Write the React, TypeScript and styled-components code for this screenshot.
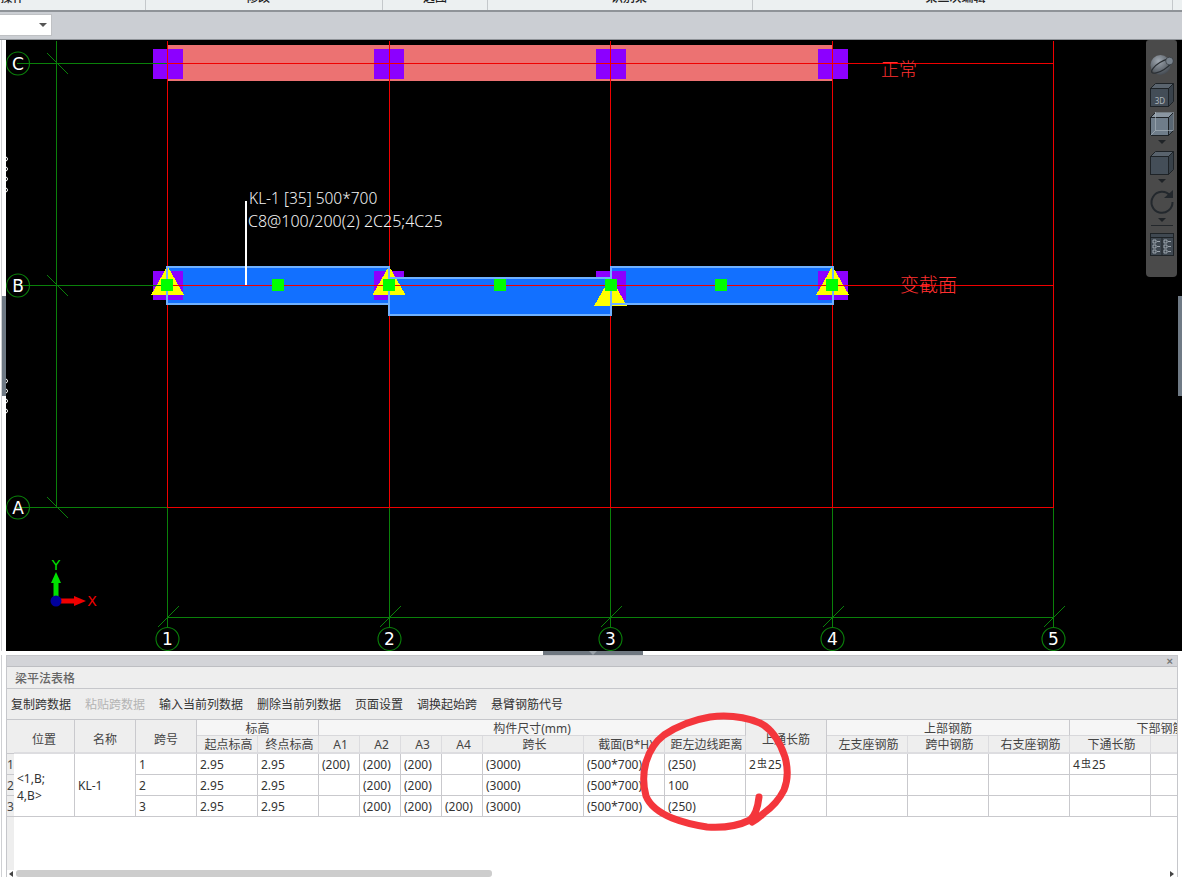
import styled, { createGlobalStyle } from "styled-components";

const GlobalStyle = createGlobalStyle`
  html, body {
    margin: 0;
    padding: 0;
    background: #fff;
    overflow: hidden;
  }
`;

const Page = styled.div`
  position: relative;
  width: 1182px;
  height: 877px;
  overflow: hidden;
  display: flex;
  flex-direction: column;
  font-family: "Noto Sans", "Noto Sans CJK SC", sans-serif;
  font-size: 12px;
  color: #333;
`;

const Ribbon = styled.div`
  height: 10px;
  flex: none;
  display: flex;
  background: #ecf0f1;
  border-bottom: 2px solid #8f9398;
`;

const RibbonGroup = styled.div<{ $w: number; $shift?: number }>`
  width: ${(p) => p.$w}px;
  flex: none;
  height: 10px;
  overflow: hidden;
  display: flex;
  justify-content: center;
  align-items: flex-end;
  border-right: 1px solid #c4c8cb;
  box-sizing: border-box;
  span {
    display: block;
    line-height: 12px;
    margin-bottom: 7px;
    transform: translateX(${(p) => p.$shift ?? 0}px);
    font-family: "Noto Sans CJK SC", sans-serif;
    font-weight: 500;
    color: #222;
    white-space: nowrap;
  }
`;

const Toolbar = styled.div`
  height: 27px;
  flex: none;
  display: flex;
  align-items: flex-start;
  background: #cbced3;
  border-bottom: 1px solid #8f9398;
`;

const SelectBox = styled.div`
  width: 52px;
  height: 22px;
  margin-top: 2px;
  box-sizing: border-box;
  display: flex;
  align-items: center;
  justify-content: flex-end;
  padding-right: 4px;
  background: #fff;
  border: 1px solid #bfc1c4;
  border-left: none;
`;

const Caret = styled.i<{ $color?: string }>`
  display: block;
  width: 0;
  height: 0;
  border-left: 4px solid transparent;
  border-right: 4px solid transparent;
  border-top: 4px solid ${(p) => p.$color ?? "#555"};
`;

const Workspace = styled.div`
  height: 611px;
  flex: none;
  display: flex;
`;

const LeftRail = styled.div`
  width: 6px;
  flex: none;
  box-sizing: border-box;
  position: relative;
  background: #fff;
  &::before {
    content: "";
    position: absolute;
    left: 1px;
    top: 0;
    bottom: 0;
    width: 1px;
    background: #cfd0d3;
  }
`;

const RailGrip = styled.div`
  position: absolute;
  left: 2px;
  top: 256px;
  width: 4px;
  height: 100px;
  background: #6f7a85;
`;

const Canvas = styled.div`
  position: relative;
  flex: 1;
  background: #000;
  svg {
    display: block;
  }
`;

const ViewBar = styled.div`
  position: absolute;
  right: 5px;
  top: 0;
  width: 31px;
  height: 237px;
  box-sizing: border-box;
  padding-top: 13px;
  display: flex;
  flex-direction: column;
  align-items: center;
  background: #4a4a4a;
  border-radius: 3px 3px 4px 4px;
`;

const ViewIcon = styled.svg<{ $gap?: number }>`
  width: 24px;
  height: 24px;
  flex: none;
  overflow: visible;
  margin-bottom: ${(p) => p.$gap ?? 0}px;
`;

const ViewCaret = styled(Caret)`
  margin: 4px 0 7px;
`;

const ViewDivider = styled.div`
  width: 22px;
  height: 1px;
  flex: none;
  background: #23272b;
  margin: -4px 0 6px;
`;

const RightGrip = styled.div`
  position: absolute;
  right: 0;
  top: 256px;
  width: 4px;
  height: 100px;
  background: #6f7a85;
`;

const Splitter = styled.div`
  height: 4px;
  flex: none;
  display: flex;
  justify-content: center;
  padding-left: 4px;
  background: #fff;
`;

const SplitterHandle = styled.div`
  width: 100px;
  height: 4px;
  display: flex;
  justify-content: center;
  background: #6f7780;
`;

const PanelRow = styled.div`
  flex: 1;
  min-height: 0;
  display: flex;
`;

const Panel = styled.div`
  width: 1172px;
  flex: none;
  box-sizing: border-box;
  border: 1px solid #c6c7cb;
  border-bottom: none;
  display: flex;
  flex-direction: column;
  overflow: hidden;
  background: #fff;
`;

const PanelClose = styled.div`
  height: 10px;
  flex: none;
  display: flex;
  align-items: center;
  justify-content: flex-end;
  padding-right: 4px;
  background: #d3d4d8;
  border-bottom: 1px solid #bdbec2;
  color: #777;
  font-size: 11px;
  line-height: 10px;
  font-weight: 700;
  font-family: "Liberation Sans", sans-serif;
`;

const PanelTitle = styled.div`
  height: 21px;
  flex: none;
  display: flex;
  align-items: center;
  padding-left: 8px;
  background: #eee;
  border-bottom: 1px solid #c6c7cb;
  color: #666;
  font-weight: 500;
  font-family: "Noto Sans CJK SC", sans-serif;
`;

const ActionBar = styled.div`
  height: 31px;
  flex: none;
  box-sizing: border-box;
  padding: 0 0 2px 4px;
  display: flex;
  align-items: center;
  gap: 14px;
  background: #eee;
  border-bottom: 1px solid #c6c7cb;
  font-family: "Noto Sans CJK SC", sans-serif;
`;

const ActionButton = styled.span<{ $disabled?: boolean }>`
  color: ${(p) => (p.$disabled ? "#b4b4b4" : "#333")};
  white-space: nowrap;
`;

const TableArea = styled.div`
  flex: 1;
  min-height: 0;
  overflow: hidden;
  background: linear-gradient(to right, #eee 7px, #fff 7px);
`;

const Grid = styled.table`
  table-layout: fixed;
  width: 1245px;
  border-collapse: separate;
  border-spacing: 0;
  font-size: 12px;
  color: #333;
`;

const Col = styled.col<{ $w: number }>`
  width: ${(p) => p.$w}px;
`;

const GroupRow = styled.tr`
  height: 16px;
`;

const SubRow = styled.tr`
  height: 18px;
`;

const BodyRow = styled.tr`
  height: 21px;
`;

const HeadCell = styled.th<{ $group?: boolean; $sub?: boolean }>`
  padding: ${(p) => (p.$group ? "2px 0 0" : p.$sub ? "2px 0 0 3px" : "8px 0 0")};
  font-weight: 400;
  line-height: 12px;
  text-align: center;
  white-space: nowrap;
  overflow: hidden;
  box-sizing: border-box;
  font-family: "Noto Sans", "Noto Sans CJK SC", sans-serif;
  color: #444;
  background: ${(p) => (p.$group ? "#f6f6f6" : "#eee")};
  border-right: 1px solid ${(p) => (p.$sub ? "#dcdcdf" : "#c9c9cd")};
  border-bottom: ${(p) => (p.$group ? "1px solid #d8d8db" : "2px solid #dddde0")};
`;

const Gutter = styled.td`
  padding: 2px 0 0;
  box-sizing: border-box;
  background: #eee;
  border-bottom: 1px solid #c9c9cd;
  line-height: 14px;
  color: #444;
  text-align: left;
  overflow: hidden;
`;

const Cell = styled.td`
  padding: 2px 0 0 3px;
  box-sizing: border-box;
  line-height: 14px;
  white-space: nowrap;
  overflow: hidden;
  background: #fff;
  border-right: 1px solid #c9c9cd;
  border-bottom: 1px solid #c9c9cd;
`;

const WrapCell = styled(Cell)`
  padding-top: 4px;
  white-space: normal;
  line-height: 17px;
`;

const SteelMark = styled.span`
  font-family: "Noto Sans CJK SC", sans-serif;
  font-size: 10px;
  position: relative;
  top: -2px;
  margin: 0 1px;
`;

const ScrollBar = styled.div`
  position: absolute;
  left: 7px;
  bottom: 0;
  width: 1170px;
  height: 7px;
  box-sizing: border-box;
  padding: 0 3px 0 2px;
  display: flex;
  align-items: center;
  justify-content: space-between;
  background: #fff;
`;

const ScrollThumb = styled.div`
  width: 476px;
  height: 7px;
  margin-left: 3px;
  margin-right: auto;
  border-radius: 3px;
  background: #cdcdcd;
`;

const ScrollArrow = styled.i<{ $right?: boolean }>`
  display: block;
  width: 0;
  height: 0;
  border-top: 3px solid transparent;
  border-bottom: 3px solid transparent;
  ${(p) => (p.$right ? "border-left: 4px solid #444;" : "border-right: 4px solid #444;")}
`;

const InkOverlay = styled.svg`
  position: absolute;
  left: 0;
  top: 0;
  pointer-events: none;
`;

const GREEN = "#0a800a";
const RED = "#f00000";
const X = [167, 389, 610, 832, 1053];
const Y = [63, 285, 507];

const gridLine = (x1: number, y1: number, x2: number, y2: number, color: string) => (
  <line
    key={`${x1}-${y1}-${x2}-${y2}`}
    x1={x1 + 0.5}
    y1={y1 + 0.5}
    x2={x2 + 0.5}
    y2={y2 + 0.5}
    stroke={color}
    strokeWidth={1}
    shapeRendering="crispEdges"
  />
);

const Bubble = ({ cx, cy, label }: { cx: number; cy: number; label: string }) => (
  <g>
    <circle cx={cx} cy={cy} r={11.5} fill="none" stroke={GREEN} strokeWidth={1.1} />
    <text
      x={cx}
      y={cy + 6}
      fill="#fff"
      fontFamily="'DejaVu Sans', sans-serif"
      fontSize={17}
      textAnchor="middle"
    >
      {label}
    </text>
  </g>
);

const Tri = ({ x, base, apex, half }: { x: number; base: number; apex: number; half: number }) => (
  <polygon points={`${x},${apex} ${x + half},${base} ${x - half},${base}`} fill="#ffff00" shapeRendering="crispEdges" />
);

const Node = ({ x, y, w, h, color }: { x: number; y: number; w: number; h: number; color: string }) => (
  <rect x={x} y={y} width={w} height={h} fill={color} shapeRendering="crispEdges" />
);

const PURPLE = "#8c00ff";
const BEAM = "#1270ff";

const beams = [
  { x: 167, y: 267, w: 222, h: 37 },
  { x: 611, y: 267, w: 222, h: 37 },
  { x: 389, y: 278, w: 222, h: 37 },
];

const Drawing = () => (
  <svg width={1176} height={611} viewBox="6 40 1176 611">
    {/* normal beam */}
    <Node x={167} y={45} w={666} h={36} color="#ec7272" />
    {[153, 374, 596, 818].map((x) => (
      <Node key={x} x={x} y={49} w={29.5} h={30} color={PURPLE} />
    ))}

    {/* varied section beam: the middle span sits above the columns */}
    <Node x={167} y={267} w={222} h={37} color={BEAM} />
    <Node x={611} y={267} w={222} h={37} color={BEAM} />
    {[153, 374, 596, 818].map((x) => (
      <Node key={x} x={x} y={271} w={29.5} h={29} color={PURPLE} />
    ))}
    <Node x={389} y={278} w={222} h={37} color={BEAM} />
    <Tri x={167.5} apex={266} base={295} half={16.5} />
    <Tri x={389} apex={266} base={295} half={16.5} />
    <Tri x={610.5} apex={277} base={306} half={16.5} />
    <Tri x={832.5} apex={266} base={295} half={16.5} />

    {/* axes */}
    {gridLine(56, 40, 56, 507, GREEN)}
    {Y.map((y) => gridLine(16, y, 167, y, GREEN))}
    {Y.map((y) => gridLine(167, y, 1053, y, RED))}
    {gridLine(167, 617, 1053, 617, GREEN)}
    {X.map((x) => gridLine(x, 40, x, 507, RED))}
    {X.map((x) => gridLine(x, 507, x, 627, GREEN))}
    {Y.map((y) => gridLine(47, y - 10, 68, y + 11, GREEN))}
    {X.map((x) => gridLine(x - 10, 627, x + 11, 606, GREEN))}

    {Y.map((y, i) => (
      <Bubble key={y} cx={18} cy={y + 0.5} label={["C", "B", "A"][i]} />
    ))}
    {X.map((x, i) => (
      <Bubble key={x} cx={x + 0.5} cy={639} label={String(i + 1)} />
    ))}

    {/* beam outlines go over the triangles */}
    {beams.map((b) => (
      <rect key={b.x} x={b.x} y={b.y} width={b.w} height={b.h} fill="none" stroke="#6fb1ff" strokeWidth={2} shapeRendering="crispEdges" />
    ))}
    {[161, 272, 383, 494, 605, 715, 826].map((x) => (
      <Node key={x} x={x} y={279} w={12} h={12} color="#00ff00" />
    ))}

    {/* beam label */}
    <rect x={245} y={201} width={2} height={84} fill="#fff" />
    <text x={249} y={204} fill="#f4f4f4" fontFamily="'Noto Sans', sans-serif" fontWeight={300} fontSize={15.5}>
      KL-1 [35] 500*700
    </text>
    <text x={248} y={227} fill="#f4f4f4" fontFamily="'Noto Sans', sans-serif" fontWeight={300} fontSize={16}>
      C8@100/200(2) 2C25;4C25
    </text>
    <text x={881} y={76} fill="#ff3030" fontFamily="'Noto Sans CJK SC', sans-serif" fontWeight={300} fontSize={18}>
      正常
    </text>
    <text x={900} y={292} fill="#ff3030" fontFamily="'Noto Sans CJK SC', sans-serif" fontWeight={300} fontSize={19}>
      变截面
    </text>

    {/* coordinate marker */}
    <rect x={53.5} y={582} width={5} height={15} fill="#00e000" />
    <polygon points="56,572 61,583 51,583" fill="#00e000" />
    <rect x={61} y={598.5} width={14} height={5} fill="#f00000" />
    <polygon points="86,601 74,596 74,606" fill="#f00000" />
    <circle cx={56} cy={601} r={5.5} fill="#00009c" />
    <text x={56} y={570} fill="#00e000" fontFamily="'DejaVu Sans', sans-serif" fontSize={14} textAnchor="middle">
      Y
    </text>
    <text x={92} y={606} fill="#f00000" fontFamily="'DejaVu Sans', sans-serif" fontSize={14} textAnchor="middle">
      X
    </text>

    {/* clipped dimension text along the left edge */}
    {[159, 169, 179, 190, 381, 391, 401, 411].map((y) => (
      <circle key={y} cx={5.5} cy={y} r={2} fill="none" stroke="#fff" strokeWidth={1} />
    ))}
  </svg>
);

const CubeBase = ({ face, top, side }: { face: string; top: string; side: string }) => (
  <>
    <polygon points="0.5,5.5 5.5,0.5 23.5,0.5 18.5,5.5" fill={top} stroke="#1e2327" />
    <polygon points="18.5,5.5 23.5,0.5 23.5,18.5 18.5,23.5" fill={side} stroke="#1e2327" />
    <rect x={0.5} y={5.5} width={18} height={18} fill={face} stroke="#1e2327" />
  </>
);

const ViewTools = () => (
  <ViewBar>
    <ViewIcon viewBox="0 0 24 24" $gap={6}>
      <defs>
        <radialGradient id="ball" cx="0.4" cy="0.3" r="0.8">
          <stop offset="0" stopColor="#a0a8b1" />
          <stop offset="1" stopColor="#3a4047" />
        </radialGradient>
      </defs>
      <circle cx={10.5} cy={12} r={10} fill="url(#ball)" />
      <ellipse cx={12} cy={13} rx={12} ry={4} transform="rotate(-32 12 13)" fill="none" stroke="#2a2f34" strokeWidth={1.2} />
      <circle cx={19.5} cy={8} r={3.8} fill="#78828c" stroke="#2a2f34" strokeWidth={0.6} />
    </ViewIcon>
    <ViewIcon viewBox="0 0 24 24" $gap={5}>
      <CubeBase face="#434d57" top="#5a646e" side="#39424b" />
      <text x={10} y={21} fill="#aeb5bc" fontSize={8} textAnchor="middle" fontFamily="'Noto Sans', sans-serif">
        3D
      </text>
    </ViewIcon>
    <ViewIcon viewBox="0 0 24 24">
      <CubeBase face="#6f7d8a" top="#8a96a1" side="#5a6773" />
      <rect x={5.5} y={0.5} width={18} height={18} fill="none" stroke="#aeb8c0" strokeWidth={0.6} />
      <line x1={0.5} y1={23.5} x2={5.5} y2={18.5} stroke="#aeb8c0" strokeWidth={0.6} />
    </ViewIcon>
    <ViewCaret $color="#1f2327" />
    <ViewIcon viewBox="0 0 24 24">
      <CubeBase face="#444e58" top="#59636d" side="#384149" />
    </ViewIcon>
    <ViewCaret $color="#1f2327" />
    <ViewIcon viewBox="0 0 24 24">
      <path d="M20 5.5 A10.5 10.5 0 1 0 22.5 12" fill="none" stroke="#23282d" strokeWidth={2} />
      <polygon points="14,8 23,8 23,0" fill="#23282d" />
    </ViewIcon>
    <ViewCaret $color="#1f2327" />
    <ViewDivider />
    <ViewIcon viewBox="0 0 24 24">
      <rect x={0.5} y={1.5} width={23} height={22} fill="#3f4851" stroke="#1e2327" />
      <path d="M0.5 5.5 H23.5 M12 5.5 V23.5" stroke="#1e2327" />
      <path
        d="M3 8h3v3h-3z M3 13h3v3h-3z M3 18h3v3h-3z M14 8h3v3h-3z M14 13h3v3h-3z M14 18h3v3h-3z M7 9.5h3 M7 14.5h3 M7 19.5h3 M18 9.5h3 M18 14.5h3 M18 19.5h3"
        fill="none"
        stroke="#b3bbc3"
        strokeWidth={0.8}
      />
    </ViewIcon>
  </ViewBar>
);

const columnWidths = [7, 61, 61, 61, 61, 61, 41, 41, 41, 41, 101, 81, 81, 81, 81, 81, 81, 81, 101];

const actions = ["复制跨数据", "粘贴跨数据", "输入当前列数据", "删除当前列数据", "页面设置", "调换起始跨", "悬臂钢筋代号"];

const subHeads = ["起点标高", "终点标高", "A1", "A2", "A3", "A4", "跨长", "截面(B*H)", "距左边线距离"];
const rebarHeads = ["左支座钢筋", "跨中钢筋", "右支座钢筋", "下通长筋", ""];

const rows = [
  { a1: "(200)", a4: "", offset: "(250)", top: "2", bottom: "4" },
  { a1: "", a4: "", offset: "100", top: "", bottom: "" },
  { a1: "", a4: "(200)", offset: "(250)", top: "", bottom: "" },
];

const SteelValue = ({ count }: { count: string }) =>
  count ? (
    <>
      {count}
      <SteelMark>虫</SteelMark>25
    </>
  ) : null;

const SpanTable = () => (
  <Grid>
    <colgroup>
      {columnWidths.map((w, i) => (
        <Col key={i} $w={w} />
      ))}
    </colgroup>
    <thead>
      <GroupRow>
        <Gutter rowSpan={2} as="th" />
        <HeadCell rowSpan={2}>位置</HeadCell>
        <HeadCell rowSpan={2}>名称</HeadCell>
        <HeadCell rowSpan={2}>跨号</HeadCell>
        <HeadCell colSpan={2} $group>标高</HeadCell>
        <HeadCell colSpan={7} $group>构件尺寸(mm)</HeadCell>
        <HeadCell rowSpan={2}>上通长筋</HeadCell>
        <HeadCell colSpan={3} $group>上部钢筋</HeadCell>
        <HeadCell colSpan={2} $group>下部钢筋</HeadCell>
      </GroupRow>
      <SubRow>
        {subHeads.map((h) => (
          <HeadCell key={h} $sub>{h}</HeadCell>
        ))}
        {rebarHeads.map((h, i) => (
          <HeadCell key={i} $sub>{h}</HeadCell>
        ))}
      </SubRow>
    </thead>
    <tbody>
      {rows.map((r, i) => (
        <BodyRow key={i}>
          <Gutter>{i + 1}</Gutter>
          {i === 0 && (
            <WrapCell rowSpan={3}>
              {"<1,B;"}
              <br />
              {"4,B>"}
            </WrapCell>
          )}
          {i === 0 && <Cell rowSpan={3}>KL-1</Cell>}
          <Cell>{i + 1}</Cell>
          <Cell>2.95</Cell>
          <Cell>2.95</Cell>
          <Cell>{r.a1}</Cell>
          <Cell>(200)</Cell>
          <Cell>(200)</Cell>
          <Cell>{r.a4}</Cell>
          <Cell>(3000)</Cell>
          <Cell>(500*700)</Cell>
          <Cell>{r.offset}</Cell>
          <Cell><SteelValue count={r.top} /></Cell>
          <Cell />
          <Cell />
          <Cell />
          <Cell><SteelValue count={r.bottom} /></Cell>
          <Cell />
        </BodyRow>
      ))}
    </tbody>
  </Grid>
);

export default function App() {
  return (
    <Page>
      <GlobalStyle />
      <Ribbon>
        <RibbonGroup $w={146} $shift={-60}><span>操作</span></RibbonGroup>
        <RibbonGroup $w={237} $shift={-6}><span>修改</span></RibbonGroup>
        <RibbonGroup $w={105}><span>选图</span></RibbonGroup>
        <RibbonGroup $w={265} $shift={9}><span>识别梁</span></RibbonGroup>
        <RibbonGroup $w={420} $shift={-7}><span>梁二次编辑</span></RibbonGroup>
      </Ribbon>
      <Toolbar>
        <SelectBox>
          <Caret />
        </SelectBox>
      </Toolbar>
      <Workspace>
        <LeftRail>
          <RailGrip />
        </LeftRail>
        <Canvas>
          <Drawing />
          <ViewTools />
          <RightGrip />
        </Canvas>
      </Workspace>
      <Splitter>
        <SplitterHandle>
          <Caret $color="#9aa1a8" />
        </SplitterHandle>
      </Splitter>
      <PanelRow>
        <LeftRail />
        <Panel>
          <PanelClose>×</PanelClose>
          <PanelTitle>梁平法表格</PanelTitle>
          <ActionBar>
            {actions.map((a, i) => (
              <ActionButton key={a} $disabled={i === 1}>{a}</ActionButton>
            ))}
          </ActionBar>
          <TableArea>
            <SpanTable />
          </TableArea>
        </Panel>
      </PanelRow>
      <ScrollBar>
        <ScrollArrow />
        <ScrollThumb />
        <ScrollArrow $right />
      </ScrollBar>
      <InkOverlay width={1182} height={877}>
        <path
          d="M759 797 C758 806 756 815 750 820 C738 826 722 828 707 827 C694 825 682 822 672 818 C660 813 650 806 646 796 C643 785 643 773 646 762 C650 749 656 741 664 735 C676 727 692 720 710 717 C726 715 745 717 760 723 C772 729 780 742 785 757 C788 768 788 780 784 790 C779 800 771 808 764 813 C760 817 756 820 752 822"
          fill="none"
          stroke="#f4363c"
          strokeWidth={7}
          strokeLinecap="round"
          strokeLinejoin="round"
        />
      </InkOverlay>
    </Page>
  );
}
